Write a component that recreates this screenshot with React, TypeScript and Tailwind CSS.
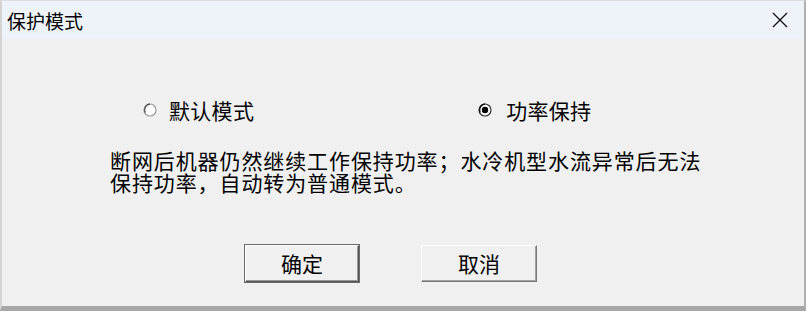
import React from "react";

const font = { fontFamily: '"Noto Sans CJK SC", "Noto Sans", sans-serif' };

function Radio({ checked }: { checked: boolean }) {
  return (
    <svg width="14" height="14" viewBox="0 0 14 14">
      <circle cx="7" cy="7" r="6" fill="#ffffff" stroke={checked ? "#333" : "#9a9a9a"} strokeWidth="1.2" />
      <path d="M2.2 9.5 A6 6 0 0 1 7 1" fill="none" stroke={checked ? "#111" : "#555"} strokeWidth="1.4" />
      {checked && <circle cx="7" cy="7" r="3.2" fill="#000" />}
    </svg>
  );
}

export default function App() {
  return (
    <div className="w-[808px] h-[312px] bg-white" style={font}>
      <div className="w-[806px] h-[311px] flex flex-col border-l-2 border-t border-r-2 border-b-[5px] border-l-[#d4d4d4] border-t-[#dcdcdc] border-r-[#b0b0b0] border-b-[#a8a8a8]">
        <div className="h-[38px] shrink-0 bg-[#eef3f9] flex items-center justify-between pl-[5px] pr-[16px]">
          <span className="text-[19px] leading-none text-black">保护模式</span>
          <svg width="16" height="16" viewBox="0 0 16 16">
            <path d="M1 1 L15 15 M15 1 L1 15" stroke="#111" strokeWidth="1.3" />
          </svg>
        </div>
        <div className="flex-1 bg-[#f0f0f0] flex flex-col">
          <div className="flex items-center mt-[59px] h-[24px]">
            <div className="ml-[141px] flex items-center gap-[12px]">
              <Radio checked={false} />
              <span className="text-[21px] tracking-[0.3px] leading-none text-black">默认模式</span>
            </div>
            <div className="ml-[224px] flex items-center gap-[14px]">
              <Radio checked={true} />
              <span className="text-[21px] tracking-[0.3px] leading-none text-black">功率保持</span>
            </div>
          </div>
          <div className="ml-[108px] mt-[27px] text-[21px] tracking-[0.9px] leading-[22px] text-black">
            <div>断网后机器仍然继续工作保持功率；水冷机型水流异常后无法</div>
            <div>保持功率，自动转为普通模式。</div>
          </div>
          <div className="flex mt-[52px]">
            <button className="ml-[243px] w-[114px] h-[37px] bg-[#f0f0f0] border border-t-white border-l-white border-r-[#555] border-b-[#555] shadow-[inset_-1px_-1px_0_#999,0_0_0_1px_#6a6a6a] text-[21px] leading-none text-black">
              确定
            </button>
            <button className="ml-[62px] w-[116px] h-[37px] bg-[#f0f0f0] border border-t-white border-l-white border-r-[#777] border-b-[#777] shadow-[inset_-1px_-1px_0_#a0a0a0] text-[21px] leading-none text-black">
              取消
            </button>
          </div>
        </div>
      </div>
    </div>
  );
}
